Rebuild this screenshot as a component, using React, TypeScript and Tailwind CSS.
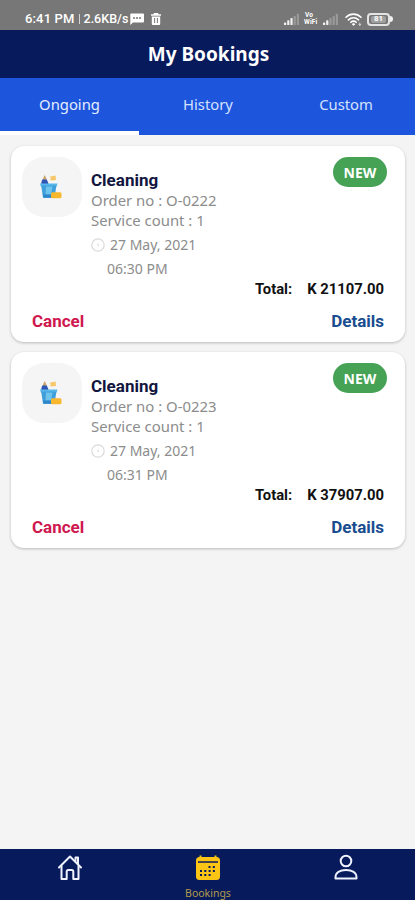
import { useState } from 'react';

interface Booking {
  service: string;
  orderNo: string;
  serviceCount: number;
  date: string;
  time: string;
  total: string;
  status: string;
}

const bookings: Booking[] = [
  {
    service: 'Cleaning',
    orderNo: 'O-0222',
    serviceCount: 1,
    date: '27 May, 2021',
    time: '06:30 PM',
    total: 'K 21107.00',
    status: 'NEW',
  },
  {
    service: 'Cleaning',
    orderNo: 'O-0223',
    serviceCount: 1,
    date: '27 May, 2021',
    time: '06:31 PM',
    total: 'K 37907.00',
    status: 'NEW',
  },
];

const tabs = ['Ongoing', 'History', 'Custom'];

const SignalIcon = ({ strength }: { strength: number }) => (
  <svg width="16" height="12" viewBox="0 0 16 12" fill="#fff">
    {[0, 1, 2, 3, 4].map((bar) => (
      <rect
        key={bar}
        x={bar * 3.2}
        y={9.5 - bar * 2.2}
        width="2.2"
        height={2.5 + bar * 2.2}
        rx="0.6"
        opacity={bar < strength ? 0.9 : 0.25}
      />
    ))}
  </svg>
);

const StatusBar = () => (
  <div className="flex h-[30px] shrink-0 items-center bg-[#777777] pl-[25px] pr-[22px] pt-2 font-['Roboto',sans-serif] text-white">
    <span className="whitespace-pre text-[13px] font-medium leading-4 tracking-[0.15px]">6:41 PM</span>
    <span className="ml-[4px] mr-[4px] h-[10px] w-px bg-white/70" />
    <span className="text-[12.5px] font-medium leading-4">2.6KB/s</span>
    <svg className="ml-[2px]" width="14" height="12" viewBox="0 0 14 12">
      <path d="M1 0.5h12a1 1 0 0 1 1 1v7a1 1 0 0 1-1 1H3L0.3 12V1.5a1 1 0 0 1 .7-1z" fill="#fff" />
      <path d="M3 5h2M6 5h2M9 5h2" stroke="#777" strokeWidth="1.4" />
    </svg>
    <svg className="ml-[6px]" width="12" height="12" viewBox="0 0 12 12">
      <path d="M4 0h4l.6 1.2H11v1.6H1V1.2h2.4zM1.8 3.4h8.4V11a1 1 0 0 1-1 1H2.8a1 1 0 0 1-1-1z" fill="#fff" />
      <path d="M4.6 5v5M7.4 5v5" stroke="#777" strokeWidth="1" />
    </svg>
    <div className="ml-auto flex items-center">
      <SignalIcon strength={3} />
      <div className="ml-[4px] flex w-[16px] flex-col text-[6.5px] font-bold leading-[7px] tracking-[0.2px]">
        <span className="pl-px">Vo</span>
        <span>WiFi</span>
      </div>
      <span className="ml-[3px] flex">
        <SignalIcon strength={2} />
      </span>
      <svg className="ml-[6px]" width="17" height="13" viewBox="0 0 17 13" fill="none" stroke="#fff" strokeLinecap="round">
        <path d="M1 4.3a10.5 10.5 0 0 1 15 0M3.5 6.9a7 7 0 0 1 10 0M5.8 9.3a3.8 3.8 0 0 1 5.4 0" strokeWidth="1.6" />
        <circle cx="8.5" cy="11.3" r="0.9" fill="#fff" />
        <path d="M14.8 10v2M13.8 11.5l1 .8 1-.8" strokeWidth="0.7" />
      </svg>
      <div className="ml-[5px] flex items-center">
        <span className="flex h-[13px] w-[23px] items-center justify-center rounded-[4px] border-2 border-white/80">
          <span className="flex h-[7px] w-[15px] items-center justify-center rounded-[2px] bg-white/30 text-[8px] font-bold leading-none">
            81
          </span>
        </span>
        <span className="h-[6px] w-[3px] rounded-r-full bg-white/90" />
      </div>
    </div>
  </div>
);

const CleaningIcon = () => (
  <svg width="24" height="26" viewBox="0 0 24 26">
    <path d="M10.5 2.8l6-1.3.5 4.5-5 .5-1-1.2 1.2-1z" fill="#f6c667" />
    <path d="M4 4.5L5.700 1l1.700 3.500v3H4z" fill="#c9a668" />
    <path d="M3.200 5.500h4.600l1.500 3.500v3.500H2.400V8.500z" fill="#2f56b4" />
    <path d="M1 9.500h17.500l-.8 3H1.800z" fill="#59b7ea" />
    <path d="M2.200 11.500h15.200l-1.900 12.300H4z" fill="#3f9fdb" />
    <path d="M7 12.500h6.500l-1.500 8H6.500z" fill="#6fc4ec" />
    <path d="M4 20.500h9v3.300H4.500z" fill="#2f87cb" />
    <rect x="12" y="18.200" width="10.500" height="6" rx="1.500" fill="#f8b72c" />
  </svg>
);

const BookingCard = ({ booking }: { booking: Booking }) => (
  <article className="flex h-[196px] flex-col rounded-[13px] bg-white pl-[11px] pr-[18px] pt-[11px] shadow-[0_1px_3px_rgba(0,0,0,0.24)]">
    <div className="flex items-start">
      <div className="flex size-[60px] items-center justify-center rounded-[22px] bg-[#f5f5f5] pr-0.5">
        <CleaningIcon />
      </div>
      <div className="ml-[9px] pt-[13px] text-[14px] leading-5 text-[#8c8c8c]">
        <h2 className="font-['Roboto',sans-serif] text-[17px] font-bold leading-5 text-[#12163f]">{booking.service}</h2>
        <p className="text-[14.9px]">Order no : {booking.orderNo}</p>
        <p className="text-[14.9px]">Service count : {booking.serviceCount}</p>
        <div className="mt-[5px] flex items-center">
          <svg width="14" height="14" viewBox="0 0 14 14" fill="none" stroke="#dadada">
            <circle cx="7" cy="7" r="6.2" strokeWidth="1.2" />
            <path d="M7 5.5V7.5h1" />
          </svg>
          <span className="ml-[5px]">{booking.date}</span>
        </div>
        <p className="ml-4 mt-1">{booking.time}</p>
      </div>
      <span className="ml-auto flex h-[30px] w-[54px] items-center justify-center rounded-full bg-[#46a356] text-[14px] font-bold text-white">
        {booking.status}
      </span>
    </div>
    <div className="flex justify-end gap-[15px] pr-[3px] font-['Roboto',sans-serif] text-[14.8px] font-bold leading-5 text-[#111]">
      <span>Total:</span>
      <span>{booking.total}</span>
    </div>
    <div className="mt-[11px] flex justify-between pl-[10px] pr-[3px] font-['Roboto',sans-serif] text-[17px] font-bold leading-[22px]">
      <button className="text-[#cf1750]">Cancel</button>
      <button className="text-[#194d8f]">Details</button>
    </div>
  </article>
);

const BottomNav = () => (
  <nav className="grid h-[51px] shrink-0 grid-cols-[139px_138px_138px] bg-[#061a5c]">
    <button className="flex justify-center pt-[5px]">
      <svg width="26" height="27" viewBox="0 0 26 27" fill="none" stroke="#f0f3ff" strokeWidth="2" strokeLinejoin="round" strokeLinecap="round">
        <path d="M2 13.5L13 2.5 24 13.5" />
        <path d="M18.5 7V3.500H21V10" />
        <path d="M4.500 12V25h5.200v-7.500q0-1.500 1.500-1.500h3.600q1.500 0 1.500 1.500V25h5.200V12" />
      </svg>
    </button>
    <button className="flex flex-col items-center pt-[6px] text-[#fcc415]">
      <svg width="26" height="26" viewBox="0 0 26 26">
        <rect x="1" y="2" width="24" height="23" rx="3.500" fill="currentColor" />
        <path d="M3 7h20" stroke="#061a5c" strokeWidth="1.500" />
        <path d="M5.500 0.500v3M20.500 0.500v3" stroke="currentColor" strokeWidth="2" />
        <path d="M13.500 12h7M5 16h16M5 20h11" stroke="#061a5c" strokeWidth="2" strokeDasharray="2 2.300" />
      </svg>
      <span className="mt-[5px] text-[10.500px] leading-[15px] text-[#b39a4b]">Bookings</span>
    </button>
    <button className="flex justify-center pt-[5px]">
      <svg width="24" height="26" viewBox="0 0 24 26" fill="none" stroke="#f0f3ff" strokeWidth="2" strokeLinejoin="round">
        <circle cx="12" cy="7" r="5.300" />
        <path d="M1.500 24.500v-1C1.500 18.500 6 16 12 16s10.500 2.500 10.500 7.500v1z" />
      </svg>
    </button>
  </nav>
);

const App = () => {
  const [activeTab, setActiveTab] = useState('Ongoing');

  return (
    <div className="flex h-screen w-full flex-col overflow-hidden bg-[#f4f4f4] font-['Noto_Sans',sans-serif]">
      <StatusBar />
      <header className="flex h-[48px] shrink-0 items-center justify-center bg-[#061a5c] pl-0.5">
        <h1 className="text-[19px] font-bold text-white">My Bookings</h1>
      </header>
      <div className="grid h-[57px] shrink-0 grid-cols-[139px_138px_138px] bg-[#1d55dc]">
        {tabs.map((tab) => (
          <button
            key={tab}
            onClick={() => setActiveTab(tab)}
            className={`border-b-4 text-[14.8px] ${tab === activeTab ? 'border-white text-[#e5edff]' : 'border-transparent text-[#d5e2ff]'}`}
          >
            {tab}
          </button>
        ))}
      </div>
      <main className="flex flex-1 flex-col gap-[10px] pl-[11px] pr-[10px] pt-[11px]">
        {bookings.map((booking) => (
          <BookingCard key={booking.orderNo} booking={booking} />
        ))}
      </main>
      <BottomNav />
    </div>
  );
};

export default App;
